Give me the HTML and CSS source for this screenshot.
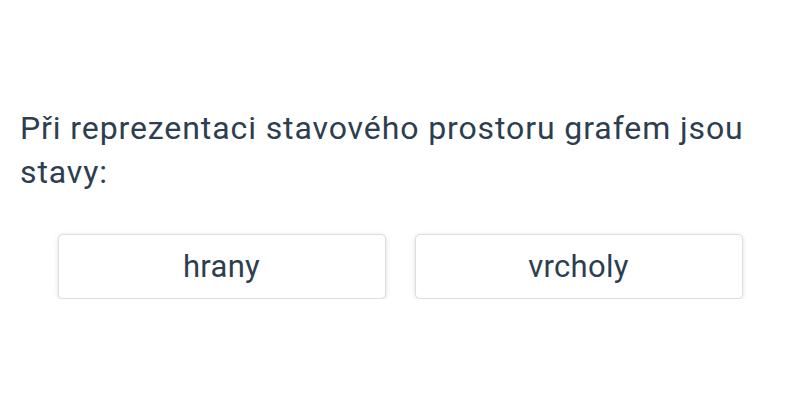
FILE: index.html
```html
<!DOCTYPE html>
<html lang="cs">
<head>
<meta charset="utf-8">
<link rel="stylesheet" href="styles.css">
</head>
<body>
<div class="quiz">
  <p class="question">Při reprezentaci stavového prostoru grafem jsou stavy:</p>
  <div class="answers">
    <button class="answer">hrany</button>
    <button class="answer">vrcholy</button>
  </div>
</div>
</body>
</html>
```
FILE: styles.css
```css
html, body {
  margin: 0;
  padding: 0;
  background: #ffffff;
}
body {
  font-family: Roboto, "Noto Sans", sans-serif;
  color: #2c3e50;
}
.quiz {
  padding: 106px 20px 0 20px;
}
.question {
  margin: 0;
  font-size: 32px;
  line-height: 44px;
  letter-spacing: 0.9px;
}
.answers {
  margin-top: 40px;
  display: flex;
  justify-content: center;
  gap: 29px;
}
.answer {
  width: 328px;
  height: 65px;
  background: #fff;
  border: 1px solid #dedede;
  border-radius: 5px;
  box-shadow: 0 1px 5px rgba(0,0,0,0.13);
  font-family: Roboto, "Noto Sans", sans-serif;
  font-size: 31px;
  letter-spacing: 0.3px;
  color: #2c3e50;
  padding: 0;
}
```
